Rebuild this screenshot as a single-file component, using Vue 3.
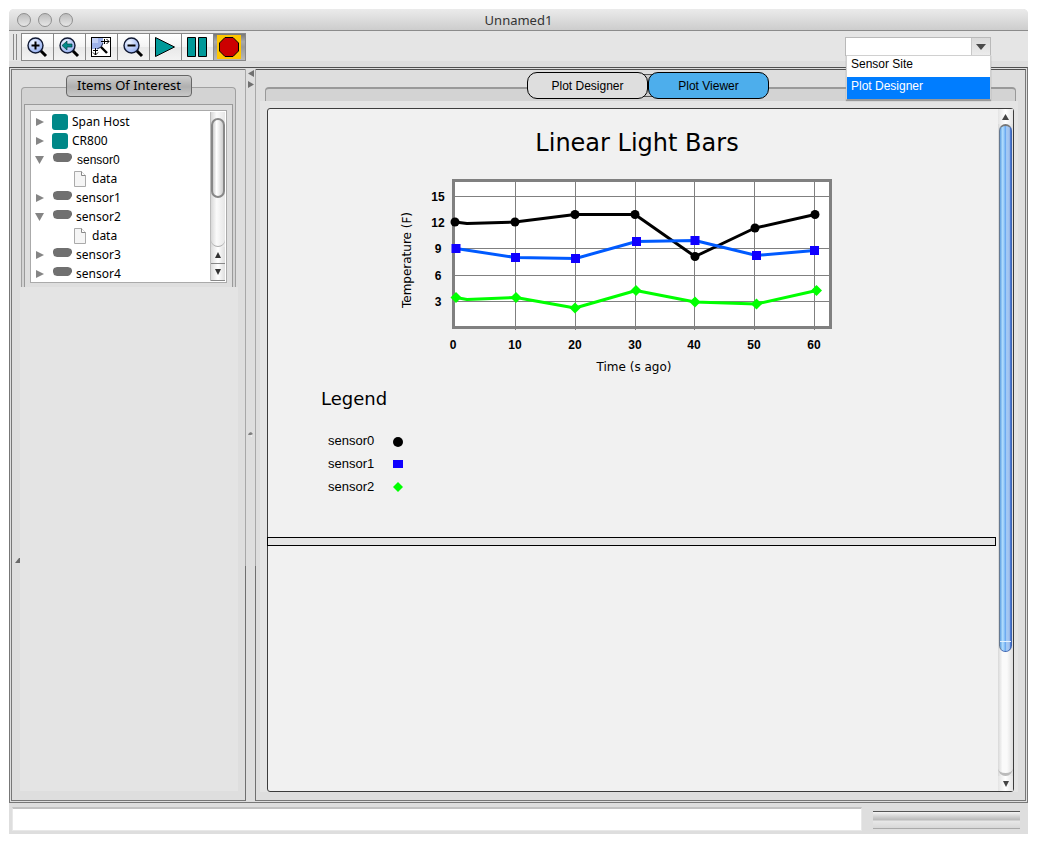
<script setup>
import { ref } from 'vue'

const site = ref('')
const status = ref('')
const siteOptions = ['Sensor Site', 'Plot Designer']

const tree = [
  { label: 'Span Host', kind: 'host', open: false },
  { label: 'CR800', kind: 'host', open: false },
  { label: 'sensor0', kind: 'sensor', open: true, alt: true },
  { label: 'data', kind: 'doc' },
  { label: 'sensor1', kind: 'sensor', open: false },
  { label: 'sensor2', kind: 'sensor', open: true },
  { label: 'data', kind: 'doc' },
  { label: 'sensor3', kind: 'sensor', open: false },
  { label: 'sensor4', kind: 'sensor', open: false },
]

const xTicks = [
  { label: '0', x: 453 },
  { label: '10', x: 515 },
  { label: '20', x: 575 },
  { label: '30', x: 635 },
  { label: '40', x: 694 },
  { label: '50', x: 754 },
  { label: '60', x: 814 },
]
const yTicks = [
  { label: '15', y: 196 },
  { label: '12', y: 222 },
  { label: '9', y: 248 },
  { label: '6', y: 275 },
  { label: '3', y: 301 },
]
const gridX = [515, 575, 635, 694, 754, 814]
const gridY = [196, 248, 275, 301]

const black = [[455, 222], [515, 222], [575, 214.5], [635, 214.5], [695, 256.5], [755, 228], [815, 214.5]]
const blue = [[456, 248.5], [515.5, 257.5], [575.5, 258.5], [636.5, 241.5], [695, 240.5], [756.5, 255.5], [814.5, 250.5]]
const green = [[456, 297.5], [516, 297.5], [575, 308], [636, 290.5], [695, 302], [756.5, 304], [816.5, 290.5]]

const path = (pts) => pts.map((p) => p.join(',')).join(' ')
const blackLine = path([black[0], [467, 223.5], ...black.slice(1)])
const greenLine = path([green[0], [467, 299.5], ...green.slice(1)])
const diamond = ([x, y]) => path([[x, y - 5.5], [x + 5.5, y], [x, y + 5.5], [x - 5.5, y]])
</script>

<template>
  <div class="window">
    <header class="titlebar">
      <div class="lights">
        <button class="light" aria-label="Close"></button>
        <button class="light" aria-label="Minimize"></button>
        <button class="light" aria-label="Zoom"></button>
      </div>
      <h1 class="title">Unnamed1</h1>
    </header>

    <div class="toolbar">
      <div class="handle"></div>
      <div class="tools">
        <button class="tool" aria-label="Zoom in">
          <svg width="22" height="22" viewBox="0 0 22 22">
            <defs>
              <radialGradient id="lens" cx="0.35" cy="0.3" r="0.8">
                <stop offset="0" stop-color="#eef4ff" />
                <stop offset="1" stop-color="#8eaaf0" />
              </radialGradient>
            </defs>
            <path d="M14 14l6 6" stroke="#000" stroke-width="3" />
            <circle cx="9.5" cy="9.5" r="7.5" fill="url(#lens)" stroke="#111a33" stroke-width="1.4" />
            <path d="M5.500 9.500h8M9.500 5.500v8" stroke="#000" stroke-width="2" />
          </svg>
        </button>
        <button class="tool" aria-label="Previous zoom">
          <svg width="22" height="22" viewBox="0 0 22 22">
            <path d="M14 14l6 6" stroke="#000" stroke-width="3" />
            <circle cx="9.5" cy="9.5" r="7.5" fill="url(#lens)" stroke="#111a33" stroke-width="1.4" />
            <path d="M4 9.500l5-4.500v3h5v3h-5v3z" fill="#008b8b" stroke="#003c3c" stroke-width="0.7" />
          </svg>
        </button>
        <button class="tool" aria-label="Zoom to fit">
          <svg width="22" height="22" viewBox="0 0 22 22">
            <rect x="1.5" y="1.5" width="19" height="19" fill="#fff" stroke="#000" />
            <path d="M2 2h11v6q-1 4-5 5H2z" fill="#9db2ea" />
            <path d="M2 2h6v5H2z" fill="#c3d0f5" />
            <path d="M13 7q-1 5-6 6" fill="none" stroke="#222c50" />
            <path d="M11 11l6 6" stroke="#000" stroke-width="2.4" />
            <path d="M11 5.500h8M16.500 3l2.500 2.500-2.500 2.500M14.500 3v5" fill="none" stroke="#000" />
            <path d="M5.500 12v7M3 16.500l2.500 2.500 2.500-2.500M3 14.500h5" fill="none" stroke="#000" />
          </svg>
        </button>
        <button class="tool" aria-label="Zoom out">
          <svg width="22" height="22" viewBox="0 0 22 22">
            <path d="M14 14l6 6" stroke="#000" stroke-width="3" />
            <circle cx="9.5" cy="9.5" r="7.5" fill="url(#lens)" stroke="#111a33" stroke-width="1.4" />
            <path d="M5.500 9.500h8" stroke="#000" stroke-width="2" />
          </svg>
        </button>
        <button class="tool" aria-label="Play">
          <svg width="22" height="22" viewBox="0 0 22 22">
            <path d="M1.500 1.500L20.500 11 1.500 20.500z" fill="#009999" stroke="#000" />
          </svg>
        </button>
        <button class="tool" aria-label="Pause">
          <svg width="22" height="22" viewBox="0 0 22 22">
            <path d="M1.500 1.500h8v19h-8zM12.500 1.500h8v19h-8z" fill="#009999" stroke="#000" />
          </svg>
        </button>
        <button class="tool pressed" aria-label="Stop">
          <svg width="24" height="24" viewBox="0 0 24 24">
            <rect width="24" height="24" fill="#ffc600" />
            <path d="M8 2.500h8l5.500 5.500v8L16 21.500H8L2.500 16V8z" fill="#cc0000" stroke="#000" />
          </svg>
        </button>
      </div>
      <div class="combo">
        <select v-model="site" class="combo-box" aria-label="View">
          <option value=""></option>
          <option v-for="o in siteOptions" :key="o">{{ o }}</option>
        </select>
        <span class="combo-arrow" aria-hidden="true">
          <svg width="10" height="6" viewBox="0 0 10 6"><path d="M0 0h10L5 6z" fill="#4a4a4a" /></svg>
        </span>
        <ul class="combo-list" role="listbox" aria-label="View options">
          <li v-for="o in siteOptions" :key="o" role="option" :aria-selected="o === 'Plot Designer'"
            :class="['choice', { active: o === 'Plot Designer' }]">{{ o }}</li>
        </ul>
      </div>
    </div>

    <main class="workspace">
      <aside class="side">
        <div class="side-head">
          <button class="items-button">Items Of Interest</button>
        </div>
        <div class="group">
          <div class="group-inner">
            <div class="tree">
              <ul class="nodes">
                <li v-for="(n, i) in tree" :key="i" :class="['node', n.kind]">
                  <svg v-if="n.kind !== 'doc'" class="twist" width="10" height="10" viewBox="0 0 10 10">
                    <path :d="n.open ? 'M0 1h9L4.500 9z' : 'M1 1l8 4-8 4z'" fill="#858585" />
                  </svg>
                  <span v-if="n.kind === 'host'" class="host-icon"></span>
                  <svg v-else-if="n.kind === 'sensor'" class="pill" width="19" height="9" viewBox="0 0 19 9">
                    <path d="M4 0h11l3 1 1 2v2l-2 3-2 1H4L1 8 0 5V3l1-2z" fill="#707070" />
                  </svg>
                  <svg v-else class="doc-icon" width="12" height="16" viewBox="0 0 12 16">
                    <path d="M0.500 0.500h7l4 4v11h-11z" fill="#f5f5f5" stroke="#aaa" />
                    <path d="M7.500 0.500v4h4" fill="#fff" stroke="#888" />
                  </svg>
                  <span :class="{ alt: n.alt }">{{ n.label }}</span>
                </li>
              </ul>
              <div class="mini-scroll">
                <div class="mini-thumb"></div>
                <div class="mini-track"></div>
                <button class="mini-arrow" aria-label="Scroll up">
                  <svg width="6" height="6" viewBox="0 0 6 6"><path d="M3 0l3 6H0z" fill="#333" /></svg>
                </button>
                <button class="mini-arrow" aria-label="Scroll down">
                  <svg width="6" height="6" viewBox="0 0 6 6"><path d="M0 0h6L3 6z" fill="#333" /></svg>
                </button>
              </div>
            </div>
          </div>
        </div>
        <div class="side-rest"></div>
        <svg class="side-mark" width="5" height="5" viewBox="0 0 5 5"><path d="M0 5l4-5h1v5z" fill="#6a6a6a" /></svg>
      </aside>

      <div class="splitter">
        <svg width="6" height="7" viewBox="0 0 6 7"><path d="M6 0v7L0 3.500z" fill="#707070" /></svg>
        <svg width="6" height="7" viewBox="0 0 6 7"><path d="M0 0v7l6-3.500z" fill="#707070" /></svg>
        <svg class="grip" width="5" height="5" viewBox="0 0 5 5">
          <path d="M0 3L1 1l2-1 2 2-2 1z" fill="#808080" /><path d="M2 4l2-1v2z" fill="#f4f4f4" />
        </svg>
      </div>

      <section class="content">
        <div class="tabs">
          <div class="tab-set" role="tablist">
            <button class="tab" role="tab" aria-selected="false">Plot Designer</button>
            <button class="tab current" role="tab" aria-selected="true">Plot Viewer</button>
          </div>
        </div>
        <div class="tab-strip"></div>
        <div class="stage">
          <div class="viewer">
            <div class="page">
              <h2 class="plot-title">Linear Light Bars</h2>
              <svg class="chart" width="480" height="205" viewBox="397 175 480 205" role="img" aria-label="Temperature over time">
                <rect x="453.5" y="180.5" width="377" height="147" fill="#fff" stroke="#808080" stroke-width="3" />
                <path v-for="x in gridX" :key="'x' + x" :d="`M${x + 0.5} 182V330`" stroke="#808080" />
                <path v-for="y in gridY" :key="'y' + y" :d="`M455 ${y + 0.5}H829`" stroke="#808080" />
                <g fill="none" stroke-width="3" stroke-linejoin="round">
                  <polyline :points="blackLine" stroke="#000" />
                  <polyline :points="path(blue)" stroke="#005aff" />
                  <polyline :points="greenLine" stroke="#00ff00" />
                </g>
                <circle v-for="(p, i) in black" :key="'c' + i" :cx="p[0]" :cy="p[1]" r="4.5" fill="#000" />
                <rect v-for="(p, i) in blue" :key="'r' + i" :x="p[0] - 4.5" :y="p[1] - 4.5" width="9" height="9" fill="#1000ff" />
                <polygon v-for="(p, i) in green" :key="'d' + i" :points="diamond(p)" fill="#00ff00" />
                <g class="tick" text-anchor="middle">
                  <text v-for="t in yTicks" :key="'ty' + t.label" x="438" :y="t.y + 5">{{ t.label }}</text>
                  <text v-for="t in xTicks" :key="'tx' + t.label" :x="t.x" y="349">{{ t.label }}</text>
                </g>
                <g class="axis" text-anchor="middle">
                  <text x="634" y="371">Time (s ago)</text>
                  <text transform="translate(411 260) rotate(-90)">Temperature (F)</text>
                </g>
              </svg>
              <section class="legend">
                <h3 class="legend-title">Legend</h3>
                <ul class="legend-list">
                  <li class="legend-item">sensor0
                    <svg width="12" height="12" viewBox="0 0 12 12"><circle cx="6" cy="7" r="5" /></svg>
                  </li>
                  <li class="legend-item">sensor1
                    <svg width="12" height="12" viewBox="0 0 12 12"><rect x="1" y="2" width="10" height="8" fill="#1000ff" /></svg>
                  </li>
                  <li class="legend-item">sensor2
                    <svg width="12" height="12" viewBox="0 0 12 12"><path d="M6 1l5 5-5 5-5-5z" fill="#00ff00" /></svg>
                  </li>
                </ul>
              </section>
              <div class="divider"></div>
            </div>
            <div class="scroll">
              <button class="scroll-arrow" aria-label="Page up">
                <svg width="7" height="6" viewBox="0 0 7 6"><path d="M3.500 0L7 6H0z" fill="#444" /></svg>
              </button>
              <div class="scroll-thumb"></div>
              <div class="scroll-track"></div>
              <button class="scroll-arrow foot" aria-label="Page down">
                <svg width="6" height="6" viewBox="0 0 6 6"><path d="M0 0h6L3 6z" fill="#444" /></svg>
              </button>
            </div>
          </div>
        </div>
      </section>
    </main>

    <footer class="status">
      <input v-model="status" class="status-text" type="text" aria-label="Status" />
      <div class="groove"></div>
    </footer>
  </div>
</template>

<style>
body {
  background: #fff;
}
</style>

<style scoped>
* {
  box-sizing: border-box;
}

.window {
  display: flex;
  flex-direction: column;
  min-height: calc(100vh - 18px);
  margin: 9px;
  background: #dedede;
  border-radius: 5px 5px 0 0;
  color: #000;
  font: 12px/16px "Noto Sans", sans-serif;
}

ul {
  list-style: none;
  margin: 0;
  padding: 0;
}

button {
  display: flex;
  align-items: center;
  justify-content: center;
  padding: 0;
  color: #000;
}

.titlebar {
  display: grid;
  grid-template-columns: 1fr auto 1fr;
  align-items: center;
  height: 22px;
  padding: 0 8px;
  background: linear-gradient(#ebebeb, #cdcdcd);
  border-bottom: 1px solid #8b8b8b;
  border-radius: 5px 5px 0 0;
}

.lights {
  display: flex;
  gap: 7px;
}

.light {
  width: 14px;
  height: 14px;
  border: 1px solid #8f8f8f;
  border-radius: 50%;
  background: linear-gradient(#bdbdbd, #e6e6e6);
}

.title {
  margin: 0;
  font-size: 13px;
  font-weight: 400;
  line-height: 20px;
  color: #333;
}

.toolbar {
  display: flex;
  height: 36px;
  padding: 2px 37px 0 4px;
  background: linear-gradient(#e5e5e5 30px, #dedede 30px);
}

.handle {
  width: 4px;
  height: 26px;
  margin: 1px 4px 0 0;
  border: 1px solid #888;
  border-width: 0 1px;
}

.tools {
  display: flex;
  height: 28px;
  border-right: 1px solid #888;
}

.tool {
  width: 32px;
  padding-right: 2px;
  border: 1px solid #888;
  border-right: 0;
  background: linear-gradient(#fff, #f3f3f3 50%, #e8e8e8 50%, #f3f3f3);
}

.tool.pressed {
  background: linear-gradient(#777, #aaa 30%, #999 50%, #b8b8b8);
}

.combo {
  position: relative;
  display: flex;
  align-self: flex-start;
  width: 146px;
  height: 19px;
  margin: 4px 0 0 auto;
  border: 1px solid #b9b9b9;
  background: #fff;
}

.combo-box {
  flex: 1;
  appearance: none;
  border: 0;
  background: #fff;
  font: 12px/16px "Liberation Sans", Arial, sans-serif;
}

.combo-arrow {
  display: flex;
  align-items: center;
  justify-content: center;
  width: 19px;
  border-left: 1px solid #c8c8c8;
  background: linear-gradient(#dadada, #ececec);
  pointer-events: none;
}

.combo-list {
  position: absolute;
  z-index: 3;
  top: 17px;
  left: 0;
  right: -1px;
  border: 1px solid #d0d0d0;
  border-bottom-color: #999;
  background: #fff;
  box-shadow: 0 1px 1px #999;
  font: 12px/16px "Liberation Sans", Arial, sans-serif;
}

.choice {
  height: 21px;
  padding: 0 4px;
}

.choice.active {
  height: 22px;
  padding-top: 1px;
  background: #007dff;
  color: #fff;
}

.workspace {
  display: flex;
  flex: 1;
  padding: 1px;
  border: 1px solid #777;
  border-top-color: #505050;
}

.side {
  position: relative;
  display: flex;
  flex-direction: column;
  width: 234px;
  padding: 5px 7px 9px 8px;
  border: 1px solid #777;
  border-right: 0;
}

.side-head {
  position: relative;
  z-index: 1;
  display: flex;
  justify-content: center;
}

.items-button {
  width: 126px;
  height: 22px;
  padding-bottom: 2px;
  border: 1px solid #666;
  border-radius: 4px;
  background: linear-gradient(#d0d0d0, #b4b4b4 45%, #b0b0b0 55%, #c8c8c8);
  font: 13px/18px "Noto Sans", sans-serif;
}

.group {
  margin: -10px 2px 0 1px;
  padding: 16px 2px 0;
  border: solid #a0a0a0;
  border-width: 1px 1px 0;
  border-radius: 4px 4px 0 0;
  background: #d3d3d3;
}

.group-inner {
  padding: 5px 5px 4px;
  border: solid #9a9a9a;
  border-width: 1px 1px 0;
  background: #dedede;
}

.tree {
  display: flex;
  height: 173px;
  padding: 1px 1px 1px 0;
  overflow: hidden;
  border: 1px solid #aaa;
  background: #fff;
}

.nodes {
  flex: 1;
}

.node {
  display: flex;
  align-items: center;
  height: 19px;
  padding-left: 4px;
}

.twist {
  margin-right: 7px;
}

.host-icon {
  width: 16px;
  height: 16px;
  margin-right: 4px;
  border-radius: 3px;
  background: #008888;
}

.pill {
  margin: 0 4px 4px 1px;
}

.doc {
  padding-left: 43px;
}

.doc-icon {
  margin-right: 6px;
}

.alt {
  padding-left: 1px;
  font-family: "Liberation Sans", Arial, sans-serif;
}

.mini-scroll {
  display: flex;
  flex-direction: column;
  width: 15px;
  padding-top: 6px;
  border-left: 1px solid #bbb;
  background: linear-gradient(90deg, #d8d8d8, #fafafa 40%, #e6e6e6);
}

.mini-thumb {
  height: 80px;
  border: 2px solid #888;
  border-radius: 7px;
  background: linear-gradient(90deg, #ccc, #fff 35%, #eee 60%, #ccc);
}

.mini-track {
  flex: 1;
  border-bottom: 1px solid #aaa;
  border-radius: 0 0 7px 7px;
}

.mini-arrow {
  height: 17px;
  border: 0;
  border-bottom: 1px solid #888;
  background: linear-gradient(90deg, #ddd, #fff, #ddd);
}

.side-rest {
  flex: 1;
  background: #e4e4e4;
}

.side-mark {
  position: absolute;
  left: 3px;
  top: 488px;
}

.splitter {
  position: relative;
  display: flex;
  flex-direction: column;
  align-items: center;
  gap: 4px;
  width: 11px;
  padding-top: 1px;
  border: solid #a8a8a8;
  border-width: 0 1px;
  border-image: linear-gradient(#a8a8a8 497px, #707070 497px) 1;
}

.grip {
  position: absolute;
  top: 363px;
  left: 2px;
}

.content {
  display: flex;
  flex: 1;
  flex-direction: column;
  min-width: 0;
  padding: 2px 7px 8px 4px;
  border: 1px solid #777;
  border-top-color: #505050;
  border-left: 0;
}

.tabs {
  position: relative;
  z-index: 1;
  display: flex;
  justify-content: center;
  padding-left: 18px;
}

.tab-set {
  display: flex;
  background: linear-gradient(transparent 2px, #555 2px 3px, #ccc 3px 24px, #555 24px 25px, transparent 25px) center / 20px 100% no-repeat;
}

.tab {
  width: 121px;
  height: 27px;
  border: 1px solid #000;
  border-radius: 10px;
  background: #dedede;
  font: 12px/16px "Liberation Sans", Arial, sans-serif;
}

.tab.current {
  background: #4daeec;
}

.tab-strip {
  height: 14px;
  margin: -12px 2px 0 5px;
  border: solid #999;
  border-width: 2px 1px 0;
  border-radius: 4px 4px 0 0;
  background: #d3d3d3;
}

.stage {
  display: flex;
  flex: 1;
  padding: 7px 4px 0 7px;
  background: #e4e4e4;
}

.viewer {
  display: flex;
  flex: 1;
  min-width: 0;
  border: 1px solid #3c3c3c;
  border-radius: 3px;
  background: #f1f1f1;
}

.page {
  display: flex;
  flex: 1;
  flex-direction: column;
  min-width: 0;
  padding: 19px 2px 0 0;
  font-family: "DejaVu Sans", Verdana, sans-serif;
}

.plot-title {
  align-self: center;
  margin: 0 0 17px;
  padding-left: 10px;
  font-size: 24px;
  font-weight: 400;
  line-height: 30px;
}

.chart {
  display: block;
  align-self: center;
  margin-left: 10px;
}

.tick {
  font: bold 12px "Liberation Sans", Arial, sans-serif;
}

.axis {
  font: 12px "DejaVu Sans", Verdana, sans-serif;
}

.legend {
  padding: 7px 0 0 53px;
}

.legend-title {
  margin: 0 0 18px;
  font-size: 18px;
  font-weight: 400;
  line-height: 24px;
}

.legend-list {
  padding-left: 7px;
  font: 13px/23px "Liberation Sans", Arial, sans-serif;
}

.legend-item {
  display: flex;
  align-items: center;
  justify-content: space-between;
  width: 76px;
}

.divider {
  height: 9px;
  margin: 39px 0 0 -1px;
  border: 1px solid #000;
  background: #e4e4e4;
}

.scroll {
  display: flex;
  flex-direction: column;
  width: 15px;
  background: linear-gradient(90deg, #d8d8d8, #fafafa 30%, #fafafa 60%, #ddd);
}

.scroll-arrow {
  height: 15px;
  border: 0;
  background: linear-gradient(90deg, #e4e4e4, #fff, #e4e4e4);
}

.scroll-thumb {
  flex: 528;
  margin: 0 1px;
  border: 1px solid #3c64b0;
  border-top: 2px solid #777;
  border-left-color: #66788f;
  border-radius: 7px;
  background:
    linear-gradient(#e4f2ff, #e4f2ff) 0 calc(100% - 9px) / 100% 1px no-repeat,
    linear-gradient(90deg, #5f9fe0, #b4e0ff 25%, #6daaf0 50%, #a6cbf5 60%, #a0c0ec 85%, #2458c8);
}

.scroll-track {
  flex: 122;
  border-bottom: 3px solid #bbb;
  border-radius: 0 0 8px 8px;
}

.scroll-arrow.foot {
  border-radius: 0 0 3px 0;
}

.status {
  display: flex;
  gap: 11px;
  height: 31px;
  padding: 4px 8px 3px 3px;
}

.status-text {
  flex: 1;
  min-width: 0;
  border: 1px solid #e8e8e8;
  border-top: 2px solid #c2c2c2;
  background: #fff;
  font: 12px/16px "Liberation Sans", Arial, sans-serif;
}

.groove {
  width: 147px;
  height: 18px;
  margin-top: 4px;
  border-top: 1px solid #555;
  border-bottom: 1px solid #aaa;
  background: linear-gradient(#f4f4f4, #c6c6c6 6px, #bababa 8px, #e8e8e8 9px, #d8d8d8);
}
</style>
